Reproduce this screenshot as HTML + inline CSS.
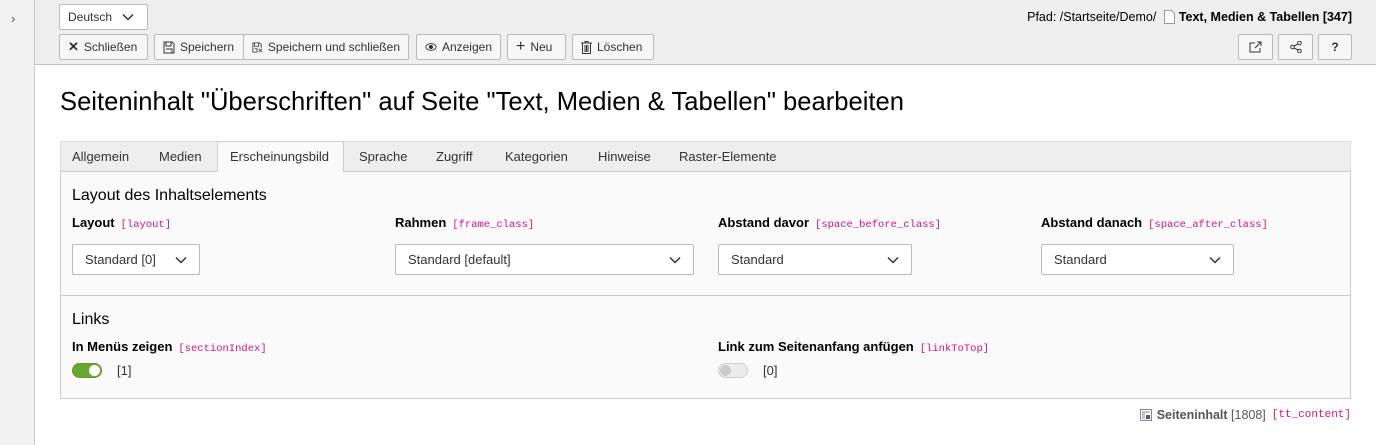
<!DOCTYPE html>
<html><head><meta charset="utf-8"><style>
*{box-sizing:border-box;margin:0;padding:0}
body{width:1376px;height:445px;overflow:hidden;background:#fff;font-family:"Liberation Sans",sans-serif;color:#000;position:relative}
.abs{position:absolute}
.side{left:0;top:0;width:35px;height:445px;background:#f2f2f2;border-right:1px solid #ccc}
.hdr{left:35px;top:0;width:1341px;height:65px;background:#eee;border-bottom:1px solid #c3c3c3}
.btn{position:absolute;height:26px;top:34px;background:#f6f6f6;border:1px solid #bbb;border-radius:2px;font-size:12px;color:#333;display:flex;align-items:center;padding:0 8px;gap:5px;white-space:nowrap}
.pink{color:#d3147e;font-family:"Liberation Mono",monospace;font-size:10.5px;font-weight:normal;margin-left:6px}
.lbl{position:absolute;font-size:13px;font-weight:bold}
.sel{position:absolute;height:31px;background:#fff;border:1px solid #bbb;border-radius:2px;font-size:13px;color:#333;display:flex;align-items:center;padding:0 12px;justify-content:space-between}
.tab{position:absolute;top:141px;height:31px;font-size:13px;color:#333;display:flex;align-items:center}
</style></head><body>
<div class="abs side"><div class="abs" style="left:11px;top:11px;font-size:13px;color:#555">›</div></div>
<div class="abs hdr"></div>
<div class="abs" style="left:59px;top:4px;width:89px;height:26px;background:#fff;border:1px solid #bbb;border-radius:2px;font-size:12px;color:#333;display:flex;align-items:center;padding-left:8px">Deutsch <svg width="12" height="8" style="margin-left:10px" viewBox="0 0 12 8"><path d="M1 1.5l5 5 5-5" stroke="#333" stroke-width="1.5" fill="none"/></svg></div>
<div class="btn" style="left:59px;width:89px"><b style="font-size:13px">✕</b>Schließen</div>
<div class="btn" style="left:154px;width:90px"><svg width="12" height="13" viewBox="0 0 12 13"><path d="M1 1h8l2 2v9H1z M3 1v4h5V1 M3 8h6v4" stroke="#333" fill="none"/></svg>Speichern</div>
<div class="btn" style="left:243px;width:166px"><svg width="13" height="13" viewBox="0 0 13 13"><path d="M1 1h8l2 2v4 M6 12H1V1 M3 1v4h5V1 M3 8h3v4 M8 8l4 4M12 8l-4 4" stroke="#333" fill="none"/></svg>Speichern und schließen</div>
<div class="btn" style="left:416px;width:85px"><svg width="14" height="10" viewBox="0 0 14 10"><ellipse cx="7" cy="5" rx="6" ry="4" stroke="#333" fill="none"/><circle cx="7" cy="5" r="2.5" fill="#333"/></svg>Anzeigen</div>
<div class="btn" style="left:507px;width:59px"><b style="font-size:16px;font-weight:normal">+</b>Neu</div>
<div class="btn" style="left:572px;width:82px"><svg width="11" height="13" viewBox="0 0 11 13"><path d="M0 2h11M4 2V0.5h3V2M1.5 2v10.5h8V2M4 4v7M5.5 4v7M7 4v7" stroke="#333" fill="none"/></svg>Löschen</div>
<div class="abs" style="right:24px;top:10px;font-size:12.5px;color:#000;white-space:nowrap;display:flex;align-items:center">Pfad: /Startseite/Demo/&nbsp;<svg width="11" height="14" viewBox="0 0 11 14" style="margin:0 4px"><path d="M0.5 0.5h7l3 3v10h-10z" stroke="#999" fill="#fff"/></svg><b>Text, Medien &amp; Tabellen [347]</b></div>
<div class="btn" style="left:1238px;width:35px;justify-content:center"><svg width="14" height="12" viewBox="0 0 14 12"><path d="M6 2H1v9h10V7 M8 1h4v4M12 1L6 7" stroke="#333" fill="none"/></svg></div>
<div class="btn" style="left:1278px;width:35px;justify-content:center"><svg width="12" height="12" viewBox="0 0 12 12"><circle cx="2.5" cy="6" r="1.8" stroke="#333" fill="none"/><circle cx="9.5" cy="2" r="1.8" stroke="#333" fill="none"/><circle cx="9.5" cy="10" r="1.8" stroke="#333" fill="none"/><path d="M4 5l4-2M4 7l4 2" stroke="#333"/></svg></div>
<div class="btn" style="left:1318px;width:34px;justify-content:center"><b>?</b></div>
<div class="abs" style="left:60px;top:88px;font-size:25.6px;color:#000;white-space:nowrap">Seiteninhalt "Überschriften" auf Seite "Text, Medien &amp; Tabellen" bearbeiten</div>
<div class="abs" style="left:60px;top:141px;width:1291px;height:31px;background:#eee;border:1px solid #ddd;border-bottom:1px solid #ccc"></div>
<div class="abs" style="left:217px;top:141px;width:127px;height:32px;background:#fafafa;border:1px solid #ccc;border-bottom:none"></div>
<div class="tab" style="left:72px">Allgemein</div>
<div class="tab" style="left:159px">Medien</div>
<div class="tab" style="left:230px">Erscheinungsbild</div>
<div class="tab" style="left:359px">Sprache</div>
<div class="tab" style="left:436px">Zugriff</div>
<div class="tab" style="left:505px">Kategorien</div>
<div class="tab" style="left:598px">Hinweise</div>
<div class="tab" style="left:679px">Raster-Elemente</div>
<div class="abs" style="left:60px;top:172px;width:1291px;height:227px;background:#fafafa;border:1px solid #ccc;border-top:none"></div>
<div class="abs" style="left:60px;top:295px;width:1291px;height:1px;background:#ccc"></div>
<div class="abs" style="left:72px;top:187px;font-size:16px">Layout des Inhaltselements</div>
<div class="lbl" style="left:72px;top:215px">Layout<span class="pink">[layout]</span></div>
<div class="lbl" style="left:395px;top:215px">Rahmen<span class="pink">[frame_class]</span></div>
<div class="lbl" style="left:718px;top:215px">Abstand davor<span class="pink">[space_before_class]</span></div>
<div class="lbl" style="left:1041px;top:215px">Abstand danach<span class="pink">[space_after_class]</span></div>
<div class="sel" style="left:72px;top:244px;width:128px">Standard [0]<svg width="12" height="8" viewBox="0 0 12 8"><path d="M1 1.5l5 5 5-5" stroke="#333" stroke-width="1.5" fill="none"/></svg></div>
<div class="sel" style="left:395px;top:244px;width:299px">Standard [default]<svg width="12" height="8" viewBox="0 0 12 8"><path d="M1 1.5l5 5 5-5" stroke="#333" stroke-width="1.5" fill="none"/></svg></div>
<div class="sel" style="left:718px;top:244px;width:194px">Standard<svg width="12" height="8" viewBox="0 0 12 8"><path d="M1 1.5l5 5 5-5" stroke="#333" stroke-width="1.5" fill="none"/></svg></div>
<div class="sel" style="left:1041px;top:244px;width:193px">Standard<svg width="12" height="8" viewBox="0 0 12 8"><path d="M1 1.5l5 5 5-5" stroke="#333" stroke-width="1.5" fill="none"/></svg></div>
<div class="abs" style="left:72px;top:311px;font-size:16px">Links</div>
<div class="lbl" style="left:72px;top:339px">In Menüs zeigen<span class="pink">[sectionIndex]</span></div>
<div class="lbl" style="left:718px;top:339px">Link zum Seitenanfang anfügen<span class="pink">[linkToTop]</span></div>
<div class="abs" style="left:72px;top:363px;width:30px;height:15px;border-radius:8px;background:#6aa632;border:1px solid #5f9a2b"><div class="abs" style="right:1px;top:1px;width:11px;height:11px;border-radius:50%;background:#fff"></div></div>
<div class="abs" style="left:117px;top:363px;font-size:13px;color:#333">[1]</div>
<div class="abs" style="left:718px;top:363px;width:30px;height:15px;border-radius:8px;background:#ececec;border:1px solid #ccc"><div class="abs" style="left:1px;top:1px;width:11px;height:11px;border-radius:50%;background:#ccc"></div></div>
<div class="abs" style="left:763px;top:363px;font-size:13px;color:#333">[0]</div>
<div class="abs" style="right:25px;top:408px;font-size:12.5px;color:#555;white-space:nowrap;display:flex;align-items:center"><svg width="12" height="12" viewBox="0 0 12 12" style="margin-right:5px"><rect x="0.5" y="0.5" width="11" height="11" fill="#fff" stroke="#888"/><path d="M2 3h8M2 5h3M2 7h3M2 9h3" stroke="#888"/><rect x="6" y="6" width="4" height="4" fill="#7b3c9b"/></svg><b>Seiteninhalt</b>&nbsp;[1808]<span class="pink" style="font-size:11px">[tt_content]</span></div>
</body></html>
